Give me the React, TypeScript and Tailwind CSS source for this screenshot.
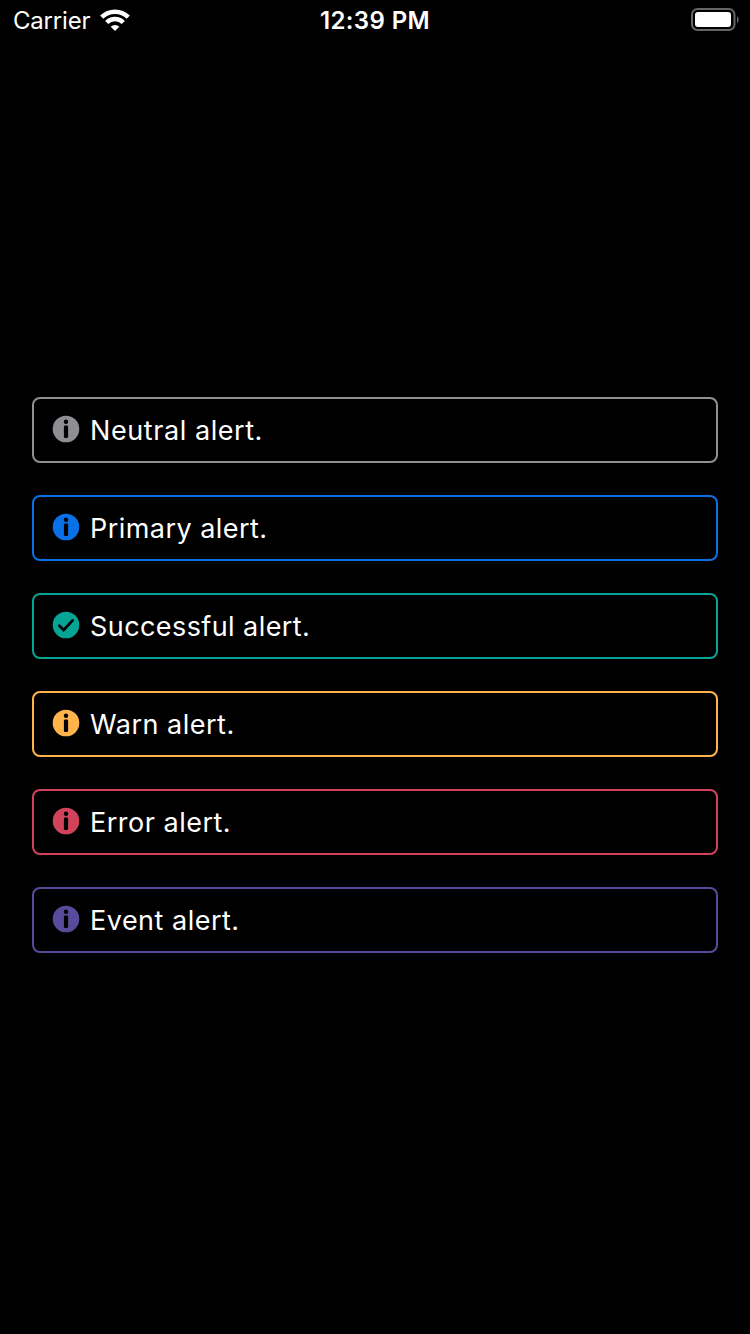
import React from "react";

type Alert = { text: string; border: string; icon: string; kind: "info" | "check"; tracking: string };

const alerts: Alert[] = [
  { text: "Neutral alert.", border: "border-[#8e8e93]", icon: "text-[#8e8e93]", kind: "info", tracking: "tracking-[0.57px]" },
  { text: "Primary alert.", border: "border-[#0a70e6]", icon: "text-[#0a70e6]", kind: "info", tracking: "tracking-[0.45px]" },
  { text: "Successful alert.", border: "border-[#05a495]", icon: "text-[#05a495]", kind: "check", tracking: "tracking-[0.42px]" },
  { text: "Warn alert.", border: "border-[#ffb44b]", icon: "text-[#ffb44b]", kind: "info", tracking: "tracking-[0.5px]" },
  { text: "Error alert.", border: "border-[#d0435b]", icon: "text-[#d0435b]", kind: "info", tracking: "tracking-[0.5px]" },
  { text: "Event alert.", border: "border-[#5a4a9c]", icon: "text-[#5a4a9c]", kind: "info", tracking: "tracking-[0.5px]" },
];

function AlertIcon({ kind }: { kind: Alert["kind"] }) {
  return (
    <svg width="28" height="28" viewBox="0 0 28 28" fill="none">
      <circle cx="14" cy="14" r="13.3" fill="currentColor" />
      {kind === "info" ? (
        <>
          <circle cx="14" cy="6.7" r="2.2" fill="#000" />
          <rect x="11.9" y="10.5" width="4.2" height="12.6" rx="1.4" fill="#000" />
        </>
      ) : (
        <path d="M7.4 14.7l4.300 4.200 8.900-9.500" stroke="#000" strokeWidth="2.8" strokeLinecap="round" />
      )}
    </svg>
  );
}

export default function App() {
  return (
    <div className="flex h-[1334px] w-[750px] flex-col bg-black font-['Inter','Liberation_Sans',sans-serif] text-white">
      <header className="grid h-10 grid-cols-3 items-center pl-3 pr-3 text-[24px]">
        <div className="flex items-center gap-[10px] pl-px">
          <span className="pt-[2px] tracking-[-0.2px]">Carrier</span>
          <svg width="30" height="22" viewBox="0 0 30 22" fill="none" stroke="#fff" strokeWidth="4.5">
            <path d="M1.700 8.100a19 19 0 0 1 26.600 0M6.700 13.500a11.800 11.800 0 0 1 16.600 0" />
            <path d="M15 22l-4.300-4.300a6.200 6.200 0 0 1 8.600 0z" fill="#fff" stroke="none" />
          </svg>
        </div>
        <span className="pt-[2px] text-center font-semibold tracking-[0.4px]">12:39 PM</span>
        <svg className="-mr-px justify-self-end" width="48" height="24" viewBox="0 0 48 24" fill="none">
          <rect x="1" y="1" width="42.500" height="21" rx="5.5" stroke="#666" strokeWidth="2" />
          <rect x="4" y="4" width="36" height="15" rx="3" fill="#fff" />
          <path d="M46 8v7q1.700-1 1.700-3.500t-1.700-3.500z" fill="#666" />
        </svg>
      </header>
      <main className="flex flex-col gap-8 px-8 pt-[357px]">
        {alerts.map((a) => (
          <div key={a.text} className={"flex h-[66px] items-center gap-[10px] rounded-lg border-2 pl-[18px] " + a.border}>
            <span className={"pb-[2px] " + a.icon}>
              <AlertIcon kind={a.kind} />
            </span>
            <span className={"pt-[2px] text-[27px] leading-8 " + a.tracking}>{a.text}</span>
          </div>
        ))}
      </main>
    </div>
  );
}
